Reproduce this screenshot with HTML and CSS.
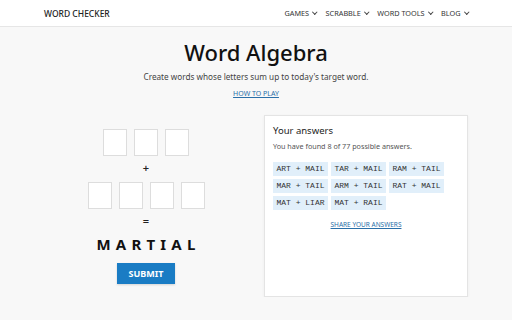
FILE: index.html
```html
<!DOCTYPE html>
<html lang="en">
<head>
  <meta charset="UTF-8">
  <title>Word Algebra</title>
  <link rel="stylesheet" href="styles.css">
</head>
<body>

  <header class="topbar">
    <div class="wrap topbar-inner">
      <a class="logo" href="#">WORD CHECKER</a>
      <nav class="nav">
        <a href="#">GAMES <span class="chev"></span></a>
        <a href="#">SCRABBLE <span class="chev"></span></a>
        <a href="#">WORD TOOLS <span class="chev"></span></a>
        <a href="#">BLOG <span class="chev"></span></a>
      </nav>
    </div>
  </header>

  <main class="wrap">
    <h1>Word Algebra</h1>
    <p class="intro">Create words whose letters sum up to today's target word.</p>
    <p class="howto"><a href="#">HOW TO PLAY</a></p>

    <div class="game">
      <div class="puzzle">
        <div class="row">
          <input class="cell" maxlength="1">
          <input class="cell" maxlength="1">
          <input class="cell" maxlength="1">
        </div>
        <div class="op">+</div>
        <div class="row">
          <input class="cell" maxlength="1">
          <input class="cell" maxlength="1">
          <input class="cell" maxlength="1">
          <input class="cell" maxlength="1">
        </div>
        <div class="op">=</div>
        <div class="target">MARTIAL</div>
        <button class="submit">SUBMIT</button>
      </div>

      <div class="answers">
        <h3>Your answers</h3>
        <p class="found">You have found 8 of 77 possible answers.</p>
        <div class="chips">
          <span class="chip">ART + MAIL</span>
          <span class="chip">TAR + MAIL</span>
          <span class="chip">RAM + TAIL</span>
          <span class="chip">MAR + TAIL</span>
          <span class="chip">ARM + TAIL</span>
          <span class="chip">RAT + MAIL</span>
          <span class="chip">MAT + LIAR</span>
          <span class="chip">MAT + RAIL</span>
        </div>
        <p class="share"><a href="#">SHARE YOUR ANSWERS</a></p>
      </div>
    </div>
  </main>

</body>
</html>
```

FILE: styles.css
```css
body {
  margin: 0;
  font-family: "Noto Sans", Arial, sans-serif;
  background-color: #f8f8f8;
  color: #222;
}

a {
  color: inherit;
  text-decoration: none;
}

.wrap {
  width: 424px;
  margin: 0 auto;
}

.topbar {
  background: #fff;
  border-bottom: 1px solid #e6e6e6;
  height: 26px;
}

.topbar-inner {
  display: flex;
  align-items: center;
  justify-content: space-between;
  height: 26px;
}

.logo {
  font-size: 8.5px;
  font-weight: 500;
  color: #222;
}

.nav {
  display: flex;
  gap: 9px;
}

.nav a {
  font-size: 7.3px;
  color: #333;
  display: flex;
  align-items: center;
  gap: 4px;
}

.chev {
  width: 2.5px;
  height: 2.5px;
  border-right: 1px solid #444;
  border-bottom: 1px solid #444;
  transform: rotate(45deg);
  margin-top: -2px;
}

h1 {
  text-align: center;
  font-size: 22px;
  line-height: 26px;
  font-weight: 500;
  margin: 12px 0 0;
  color: #111;
}

.intro {
  text-align: center;
  font-size: 8.2px;
  line-height: 12px;
  color: #444;
  margin: 6px 0 0;
}

.howto {
  text-align: center;
  font-size: 7px;
  line-height: 10px;
  margin: 6px 0 0;
}

.howto a,
.share a {
  color: #2a6fa8;
  text-decoration: underline;
  text-underline-offset: 1px;
}

.game {
  display: grid;
  grid-template-columns: 1fr 1fr;
  gap: 16px;
  margin-top: 16px;
}

.puzzle {
  display: flex;
  flex-direction: column;
  align-items: center;
  padding-top: 14px;
}

.row {
  display: flex;
  gap: 7px;
}

.cell {
  width: 24px;
  height: 27px;
  box-sizing: border-box;
  border: 1px solid #ddd;
  background: #fff;
  padding: 0;
  margin: 0;
}

.op {
  font-size: 11px;
  font-weight: 600;
  line-height: 14px;
  margin: 5px 0 7px;
}

.target {
  font-size: 15px;
  font-weight: 700;
  letter-spacing: 5.2px;
  margin: -1px 0 0 5px;
  color: #111;
}

.submit {
  margin-top: 9px;
  background: #1a7cc4;
  color: #fff;
  border: none;
  font-family: inherit;
  font-weight: 700;
  font-size: 9px;
  padding: 0;
  width: 58px;
  height: 21px;
  box-shadow: 0 1px 2px rgba(0,0,0,0.15);
}

.answers {
  background: #fff;
  border: 1px solid #e4e4e4;
  box-shadow: 0 1px 3px rgba(0,0,0,0.05);
  height: 182px;
  box-sizing: border-box;
  padding: 8px 8px;
}

.answers h3 {
  margin: 0;
  font-size: 9.5px;
  line-height: 14px;
  font-weight: 400;
}

.found {
  font-size: 7.2px;
  line-height: 10px;
  color: #555;
  margin: 3px 0 0;
}

.chips {
  display: flex;
  flex-wrap: wrap;
  gap: 3px 3px;
  margin-top: 11px;
}

.chip {
  width: 55px;
  height: 14px;
  line-height: 14px;
  text-align: center;
  background: #e1effa;
  font-family: "Liberation Mono", monospace;
  font-size: 8px;
  color: #333;
}

.share {
  text-align: center;
  font-size: 6.5px;
  line-height: 10px;
  margin: 10px 0 0;
}
```
